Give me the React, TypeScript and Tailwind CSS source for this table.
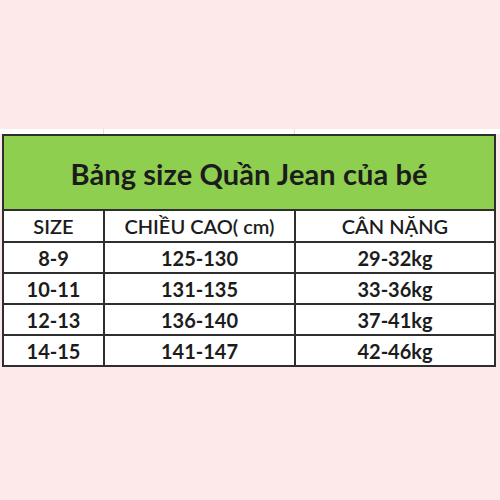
const rows = [
  { size: "8-9", height: "125-130", weight: "29-32kg" },
  { size: "10-11", height: "131-135", weight: "33-36kg" },
  { size: "12-13", height: "136-140", weight: "37-41kg" },
  { size: "14-15", height: "141-147", weight: "42-46kg" },
];

export default function App() {
  return (
    <div
      className="w-[500px] h-[500px] bg-[#fde9e9] pt-[129px] text-[#1c1c1c]"
      style={{ fontFamily: "Lato, 'Open Sans', 'Noto Sans', sans-serif" }}
    >
      {/* faint sheet strip above the table */}
      <div className="h-[5px] bg-white grid grid-cols-[104px_191px_1fr]">
        <div className="border-r border-[#e2e2e2]" />
        <div className="border-r border-[#e2e2e2]" />
        <div />
      </div>

      <div className="ml-[2px] w-[494px] border-2 border-[#2e2e2e] bg-white">
        <div className="h-[73px] bg-[#8fcf50] flex items-center justify-center">
          <h1 className="text-[29px] font-bold tracking-[0.1px] pt-[2px]">
            Bảng size Quần Jean của bé
          </h1>
        </div>

        <div className="grid grid-cols-[99px_191px_1fr] h-[32px] border-t-2 border-[#2e2e2e] text-[20px] font-semibold">
          <div className="flex items-center justify-center">SIZE</div>
          <div className="flex items-center justify-center border-l-2 border-[#2e2e2e]">
            CHIỀU CAO( cm)
          </div>
          <div className="flex items-center justify-center border-l-2 border-[#2e2e2e]">
            CÂN NẶNG
          </div>
        </div>

        {rows.map((r) => (
          <div
            key={r.size}
            className="grid grid-cols-[99px_191px_1fr] h-[31px] border-t-2 border-[#2e2e2e] text-[20px] font-bold"
          >
            <div className="flex items-center justify-center">{r.size}</div>
            <div className="flex items-center justify-center border-l-2 border-[#2e2e2e]">
              {r.height}
            </div>
            <div className="flex items-center justify-center border-l-2 border-[#2e2e2e]">
              {r.weight}
            </div>
          </div>
        ))}
      </div>
    </div>
  );
}
